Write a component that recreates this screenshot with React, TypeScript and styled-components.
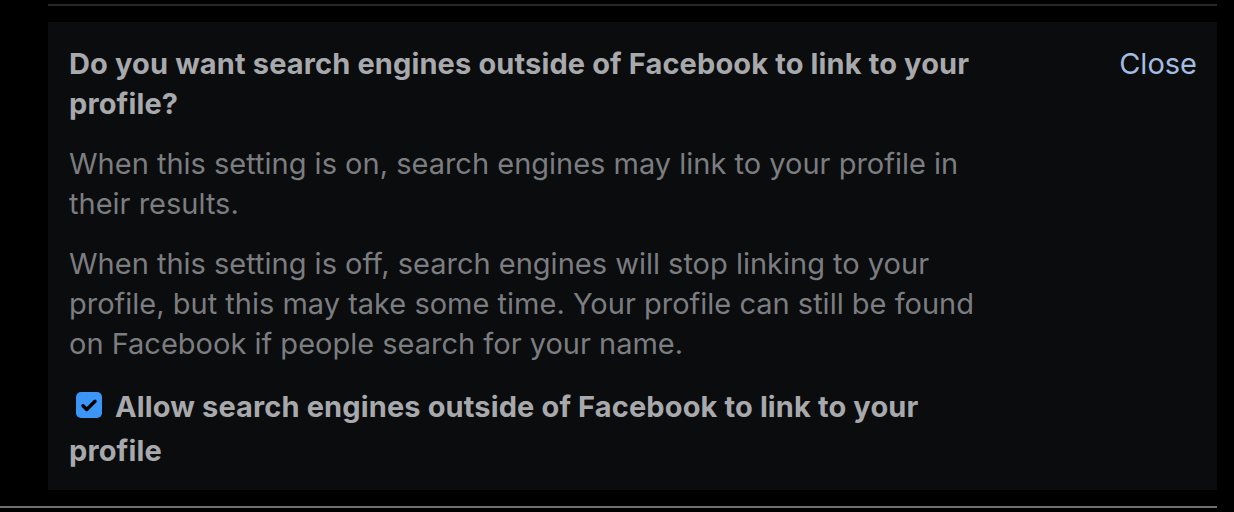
import styled, { createGlobalStyle } from "styled-components";

const GlobalStyle = createGlobalStyle`
  html, body {
    margin: 0;
    padding: 0;
    background: #000;
  }
  body {
    font-family: Inter, "Liberation Sans", Arial, sans-serif;
  }
`;

const Page = styled.div`
  width: 1234px;
  height: 512px;
  background: #000;
  display: flex;
  flex-direction: column;
  padding-top: 4px;
  box-sizing: border-box;
`;

const Rule = styled.div<{ $inset: number; $color: string }>`
  height: 2px;
  margin-left: ${(props) => props.$inset}px;
  width: ${(props) => 1217 - props.$inset}px;
  background: ${(props) => props.$color};
`;

const Panel = styled.section`
  margin: 16px 0 16px 48px;
  width: 1169px;
  height: 468px;
  box-sizing: border-box;
  background: #0b0c0e;
  padding: 22px 20px 0 21px;
  display: flex;
  justify-content: space-between;
  align-items: flex-start;
`;

const Body = styled.div`
  width: 925px;
  display: flex;
  flex-direction: column;
  gap: 20px;
`;

const Heading = styled.h2`
  margin: 0;
  font-size: 29px;
  line-height: 40px;
  font-weight: 700;
  letter-spacing: 0.13px;
  color: #a8a9ac;
`;

const Text = styled.p`
  margin: 0;
  font-size: 29px;
  line-height: 40px;
  font-weight: 400;
  color: #7b7d80;
`;

const CheckLabel = styled.label`
  display: block;
  margin-top: 1px;
  font-size: 29px;
  line-height: 44px;
  font-weight: 700;
  letter-spacing: 0.13px;
  color: #a8a9ac;
`;

const Box = styled.span`
  display: inline-flex;
  align-items: center;
  justify-content: center;
  width: 26px;
  height: 26px;
  margin: 0 13px 0 7px;
  border-radius: 5px;
  background: #3b96f6;
  vertical-align: 2px;

  svg {
    width: 20px;
    height: 20px;
  }
`;

const CloseLink = styled.a`
  font-size: 29px;
  line-height: 40px;
  color: #a3bde2;
  text-decoration: none;
  cursor: pointer;
`;

function App() {
  return (
    <>
      <GlobalStyle />
      <Page>
        <Rule $inset={48} $color="#262729" />
        <Panel>
          <Body>
            <Heading>
              Do you want search engines outside of Facebook to link to your
              profile?
            </Heading>
            <Text>
              When this setting is on, search engines may link to your profile
              in their results.
            </Text>
            <Text>
              When this setting is off, search engines will stop linking to
              your profile, but this may take some time. Your profile can still
              be found on Facebook if people search for your name.
            </Text>
            <CheckLabel>
              <Box role="checkbox" aria-checked="true">
                <svg viewBox="0 0 16 16" fill="none">
                  <path
                    d="M3.2 8.6l3 3L12.8 5"
                    stroke="#000"
                    strokeWidth="2.7"
                    strokeLinecap="round"
                    strokeLinejoin="round"
                  />
                </svg>
              </Box>
              Allow search engines outside of Facebook to link to your profile
            </CheckLabel>
          </Body>
          <CloseLink>Close</CloseLink>
        </Panel>
        <Rule $inset={0} $color="#6f6f70" />
      </Page>
    </>
  );
}

export default App;
